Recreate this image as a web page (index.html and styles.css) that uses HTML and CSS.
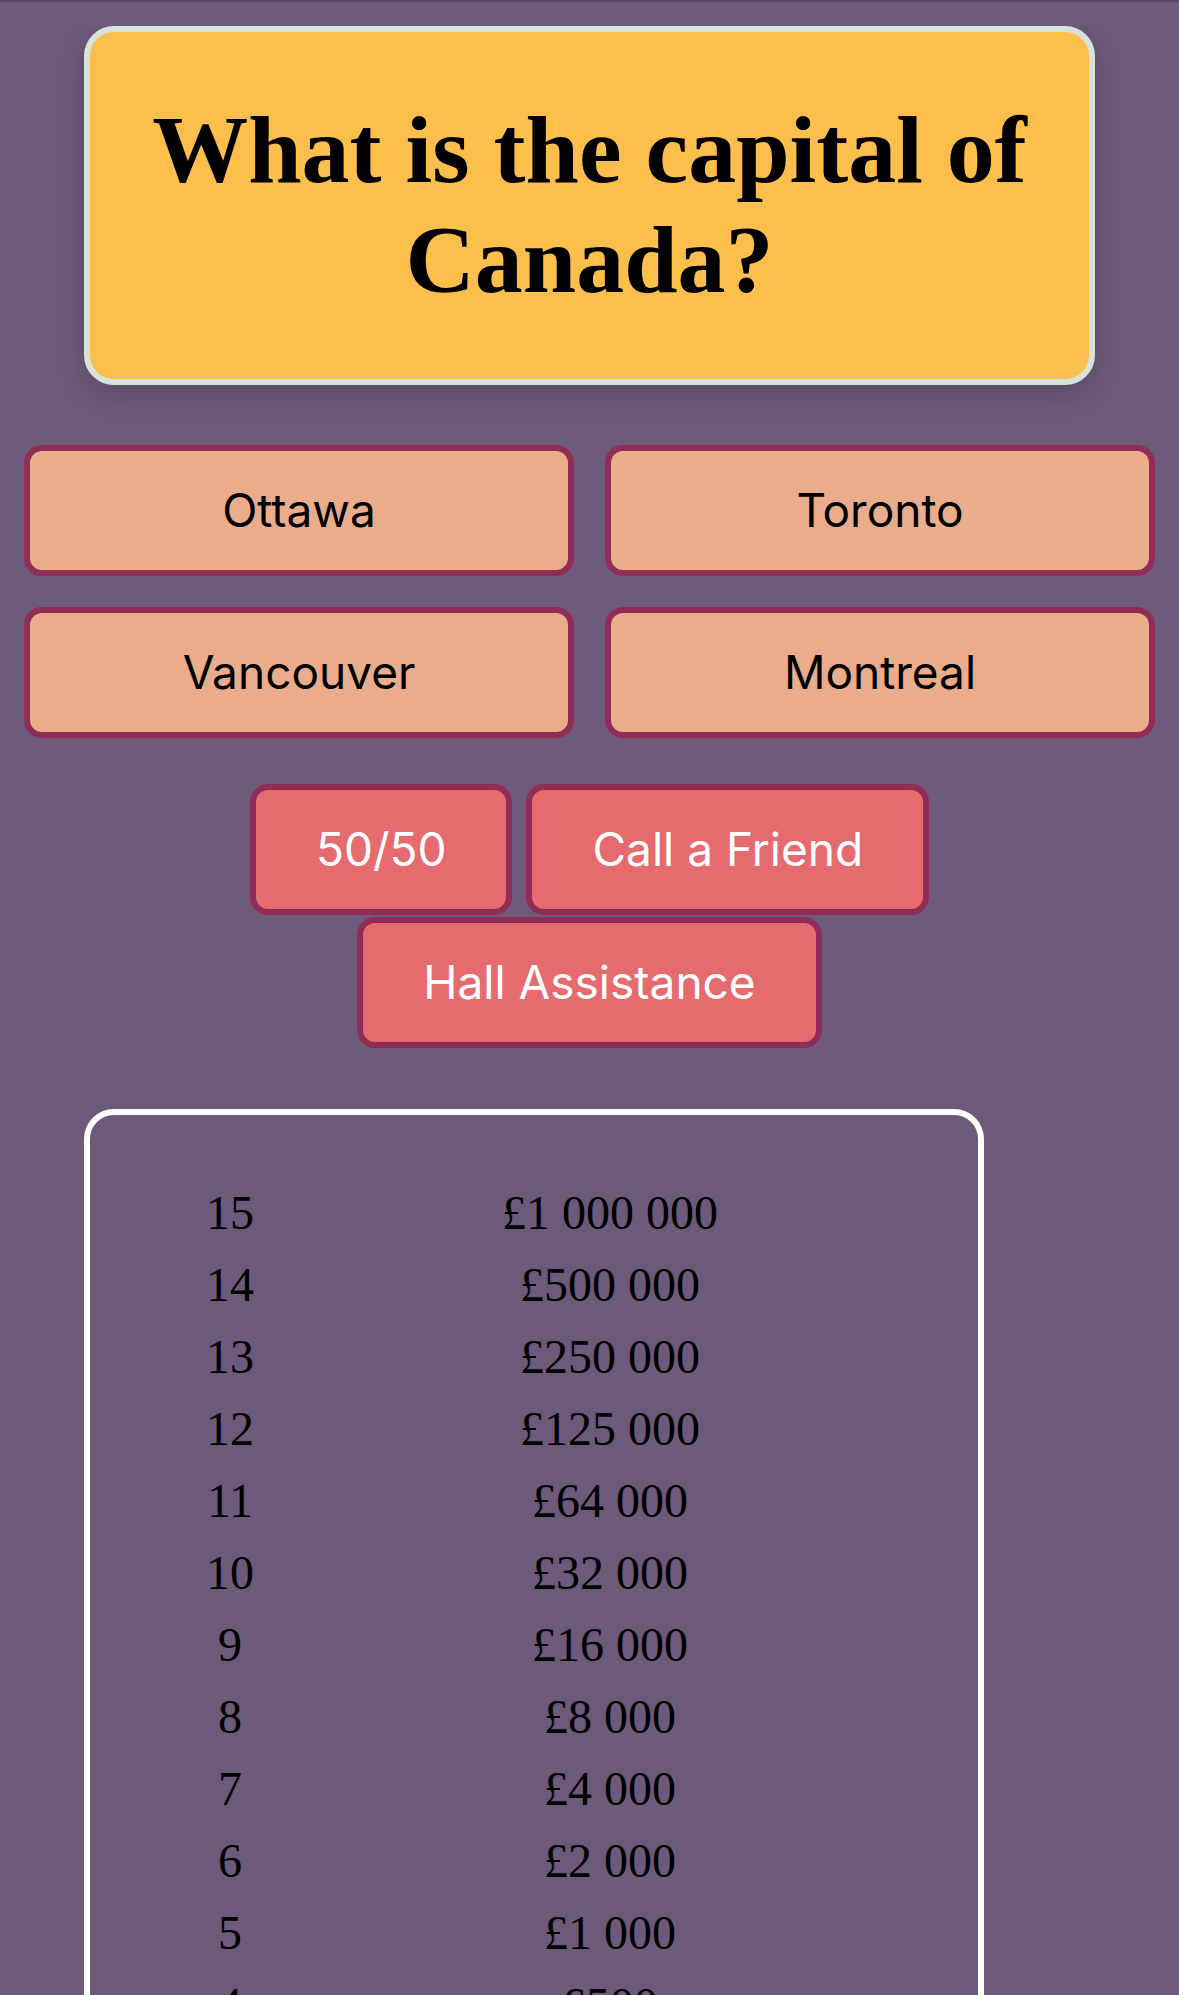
FILE: index.html
```
<!DOCTYPE html>
<html lang="en">
<head>
<meta charset="utf-8">
<title>Quiz</title>
<link rel="stylesheet" href="styles.css">
</head>
<body>
<div class="question-card">
  <h1 class="question">What is the capital of Canada?</h1>
</div>
<div class="answers">
  <button class="answer">Ottawa</button>
  <button class="answer">Toronto</button>
  <button class="answer">Vancouver</button>
  <button class="answer">Montreal</button>
</div>
<div class="lifelines">
  <button class="lifeline">50/50</button>
  <button class="lifeline">Call a Friend</button>
  <button class="lifeline">Hall Assistance</button>
</div>
<div class="prize-box">
  <div class="prize-row"><span>15</span><span>£1 000 000</span></div>
  <div class="prize-row"><span>14</span><span>£500 000</span></div>
  <div class="prize-row"><span>13</span><span>£250 000</span></div>
  <div class="prize-row"><span>12</span><span>£125 000</span></div>
  <div class="prize-row"><span>11</span><span>£64 000</span></div>
  <div class="prize-row"><span>10</span><span>£32 000</span></div>
  <div class="prize-row"><span>9</span><span>£16 000</span></div>
  <div class="prize-row"><span>8</span><span>£8 000</span></div>
  <div class="prize-row"><span>7</span><span>£4 000</span></div>
  <div class="prize-row"><span>6</span><span>£2 000</span></div>
  <div class="prize-row"><span>5</span><span>£1 000</span></div>
  <div class="prize-row"><span>4</span><span>£500</span></div>
  <div class="prize-row"><span>3</span><span>£300</span></div>
  <div class="prize-row"><span>2</span><span>£200</span></div>
  <div class="prize-row"><span>1</span><span>£100</span></div>
</div>
</body>
</html>
```
FILE: styles.css
```
html {
  background: #6d597a;
  border-top: 2px solid #56475f;
}

body {
  margin: 24px;
  font-family: "Liberation Serif", serif;
}

.question-card {
  margin: 0 60px;
  background: #fdbf4b;
  border: 6px solid #d8e2dc;
  border-radius: 30px;
  box-shadow: 0 10px 30px rgba(0, 0, 0, 0.16);
  text-align: center;
}

.question {
  margin: 63px 20px;
  font-family: "Liberation Serif", serif;
  font-weight: bold;
  font-size: 96px;
  line-height: 1.15;
  color: #000;
}

.answers {
  margin-top: 60px;
  display: grid;
  grid-template-columns: 1fr 1fr;
  gap: 31px;
}

.answer {
  height: 131px;
  box-sizing: border-box;
  border: 6px solid #8f2d56;
  border-radius: 18px;
  background: #eaac8b;
  color: #000;
  font-family: "Inter", "Liberation Sans", sans-serif;
  font-size: 46px;
  padding: 0;
  display: flex;
  align-items: center;
  justify-content: center;
}

.lifelines {
  margin-top: 46px;
  display: flex;
  flex-wrap: wrap;
  justify-content: center;
  gap: 2px 14px;
}

.lifeline {
  height: 131px;
  box-sizing: border-box;
  padding: 0 60px;
  border: 6px solid #8f2d56;
  border-radius: 18px;
  background: #e56b6f;
  color: #fff;
  font-family: "Inter", "Liberation Sans", sans-serif;
  font-size: 46px;
}

.prize-box {
  margin: 61px 0 0 60px;
  width: 900px;
  box-sizing: border-box;
  border: 6px solid #fff;
  border-radius: 30px;
  padding: 62px 0 60px 40px;
}

.prize-row {
  display: grid;
  grid-template-columns: 200px 560px;
  height: 72px;
  line-height: 72px;
  font-family: "Liberation Serif", serif;
  font-size: 48px;
  color: #000;
  text-align: center;
}
```
